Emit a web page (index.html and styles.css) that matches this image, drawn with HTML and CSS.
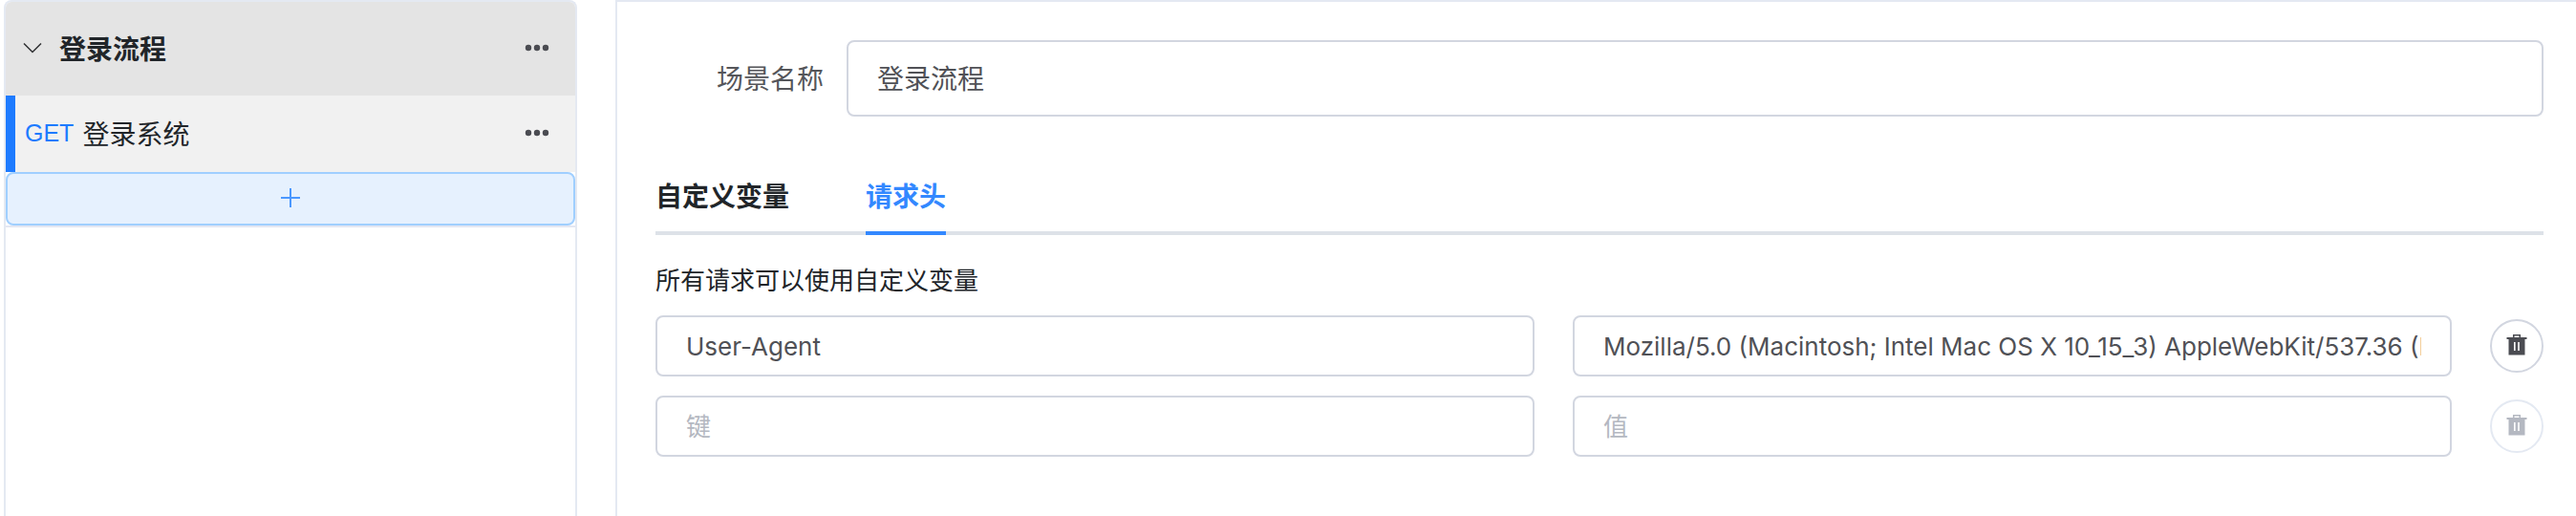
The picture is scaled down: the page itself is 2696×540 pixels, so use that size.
FILE: index.html
```html
<!DOCTYPE html>
<html lang="zh">
<head>
    <meta charset="UTF-8">
    <meta name="viewport" content="width=device-width, initial-scale=1.0">
    <title>登录流程</title>
    <link rel="stylesheet" href="styles.css">
</head>
<body>
    <div class="page">
        <!-- 场景列表 -->
        <aside class="sidebar">
            <div class="scene">
                <div class="scene-header">
                    <svg class="icon-arrow" viewBox="0 0 20 20"><path d="M1 5.500L10 14.500L19 5.500"/></svg>
                    <span class="scene-title">登录流程</span>
                    <button type="button" class="more" aria-label="更多">
                        <svg viewBox="0 0 28 28"><circle cx="5" cy="14" r="3.200"/><circle cx="14" cy="14" r="3.200"/><circle cx="23" cy="14" r="3.200"/></svg>
                    </button>
                </div>
                <div class="request active">
                    <span class="method">GET</span>
                    <span class="request-name">登录系统</span>
                    <button type="button" class="more" aria-label="更多">
                        <svg viewBox="0 0 28 28"><circle cx="5" cy="14" r="3.200"/><circle cx="14" cy="14" r="3.200"/><circle cx="23" cy="14" r="3.200"/></svg>
                    </button>
                </div>
                <button type="button" class="add-request" aria-label="添加">
                    <svg viewBox="0 0 20 20"><path d="M10 0V20M0 10H20"/></svg>
                </button>
            </div>
        </aside>

        <!-- 场景编辑 -->
        <main class="main">
            <div class="form-item">
                <label for="scene-name">场景名称</label>
                <input type="text" id="scene-name" class="input input-large" value="登录流程">
            </div>

            <div class="tabs" role="tablist">
                <button type="button" class="tab" role="tab">自定义变量</button>
                <button type="button" class="tab active" role="tab" aria-selected="true">请求头</button>
            </div>

            <p class="tip">所有请求可以使用自定义变量</p>

            <div class="kv-list">
                <div class="kv-row">
                    <input type="text" class="input" aria-label="键" placeholder="键" value="User-Agent">
                    <input type="text" class="input" aria-label="值" placeholder="值" value="Mozilla/5.0 (Macintosh; Intel Mac OS X 10_15_3) AppleWebKit/537.36 (KHTML, like Gecko)">
                    <button type="button" class="delete" aria-label="删除">
                        <svg viewBox="0 0 24 24"><path fill-rule="evenodd" d="M8 3V0H16V3H22.500V5H20.500V21.500H3.500V5H1.500V3ZM9.500 3H14.500V1.500H9.500ZM9 8V17H10.600V8ZM13.200 8V17H14.800V8Z"/></svg>
                    </button>
                </div>
                <div class="kv-row">
                    <input type="text" class="input" aria-label="键" placeholder="键">
                    <input type="text" class="input" aria-label="值" placeholder="值">
                    <button type="button" class="delete" aria-label="删除" disabled>
                        <svg viewBox="0 0 24 24"><path fill-rule="evenodd" d="M8 3V0H16V3H22.500V5H20.500V21.500H3.500V5H1.500V3ZM9.500 3H14.500V1.500H9.500ZM9 8V17H10.600V8ZM13.200 8V17H14.800V8Z"/></svg>
                    </button>
                </div>
            </div>
        </main>
    </div>
</body>
</html>
```
FILE: styles.css
```css
* {
    box-sizing: border-box;
}

body {
    margin: 0;
    font-family: "Liberation Sans", "Noto Sans CJK SC", sans-serif;
    font-size: 28px;
    color: #212529;
    background: #fff;
}

button {
    margin: 0;
    padding: 0;
    border: none;
    background: none;
    font-family: inherit;
    cursor: pointer;
}

.page {
    display: flex;
    gap: 40px;
    min-height: 100vh;
    padding-left: 4px;
}

/* 左侧列表 */
.sidebar {
    flex: 0 0 600px;
    border: 2px solid #e4e9f2;
    border-bottom: none;
    border-radius: 8px 8px 0 0;
    overflow: hidden;
}

.scene {
    border-bottom: 2px solid #e4e7f2;
}

.scene-header,
.request {
    display: flex;
    align-items: center;
    padding-right: 26px;
    padding-bottom: 2px;
}

.scene-header {
    height: 98px;
    padding-left: 18px;
    background: #e4e4e4;
}

.icon-arrow {
    width: 20px;
    height: 20px;
    margin-right: 18px;
    fill: none;
    stroke: #303133;
    stroke-width: 1.500;
}

.scene-title {
    font-weight: bold;
}

.request {
    height: 80px;
    padding-left: 10px;
    background: #f1f1f1;
}

.request.active {
    border-left: 10px solid #1e7bff;
}

.method {
    margin-right: 9px;
    font-size: 25px;
    color: #1e7bff;
}

.more {
    display: flex;
    margin-left: auto;
}

.more svg {
    width: 28px;
    height: 28px;
    fill: #4b4c52;
}

.add-request {
    display: flex;
    justify-content: center;
    align-items: center;
    width: 100%;
    height: 56px;
    padding-bottom: 2px;
    border: 2px solid #a0cfff;
    border-radius: 8px;
    background: #e6f1fe;
}

.add-request svg {
    width: 20px;
    height: 20px;
    stroke: #4b98ff;
    stroke-width: 2;
}

/* 右侧内容 */
.main {
    flex: 1;
    min-width: 0;
    padding: 40px 34px 40px 40px;
    border-top: 2px solid #e4e9f2;
    border-left: 2px solid #e4e9f2;
}

.form-item {
    display: flex;
    align-items: center;
    margin-bottom: 44px;
}

.form-item label {
    flex: 0 0 200px;
    padding-right: 24px;
    padding-bottom: 2px;
    text-align: right;
    color: #55565a;
}

.input {
    flex: 1;
    min-width: 0;
    height: 64px;
    padding: 0 30px;
    border: 2px solid #d2d6e0;
    border-radius: 8px;
    background: #fff;
    font-family: Inter, "Noto Sans CJK SC", sans-serif;
    font-size: 26px;
    color: #505156;
    outline: none;
}

.input::placeholder {
    color: #b4b8c1;
    opacity: 1;
}

.input:focus {
    border-color: #3388ff;
}

.input-large {
    height: 80px;
    padding-bottom: 2px;
    font-size: 28px;
}

/* 标签页 */
.tabs {
    display: flex;
    gap: 80px;
    box-shadow: inset 0 -4px #dde2e8;
}

.tab {
    height: 80px;
    padding-bottom: 4px;
    font-size: 28px;
    font-weight: bold;
    color: #212529;
}

.tab.active {
    color: #3388ff;
    box-shadow: inset 0 -4px #3388ff;
}

.tip {
    margin: 28px 0 16px;
    font-size: 26px;
    line-height: 40px;
}

.kv-list {
    display: grid;
    gap: 20px;
}

.kv-row {
    display: flex;
    align-items: center;
    gap: 40px;
}

.delete {
    display: flex;
    justify-content: center;
    align-items: center;
    width: 56px;
    height: 56px;
    border: 2px solid #d2d6e0;
    border-radius: 50%;
}

.delete svg {
    width: 24px;
    height: 24px;
    fill: #4b4c52;
}

.delete:disabled {
    border-color: #e4e9f2;
    cursor: not-allowed;
}

.delete:disabled svg {
    fill: #b4b8c1;
}
```
